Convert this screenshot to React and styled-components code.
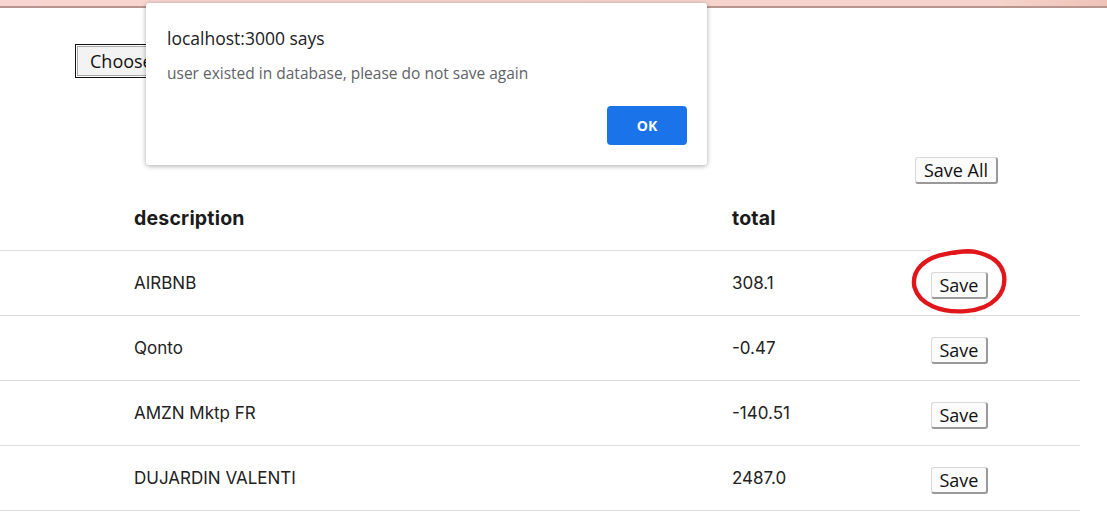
import styled, { createGlobalStyle } from "styled-components";

const rows = [
  { id: 1, description: "AIRBNB", total: "308.1", marked: true },
  { id: 2, description: "Qonto", total: "-0.47" },
  { id: 3, description: "AMZN Mktp FR", total: "-140.51" },
  { id: 4, description: "DUJARDIN VALENTI", total: "2487.0" },
];

const GlobalStyle = createGlobalStyle`
  body {
    margin: 0;
    background: #fff;
    font-family: "Inter", "Noto Sans", sans-serif;
    color: #222;
  }
`;

export default function App() {
  return (
    <StyledPage>
      <GlobalStyle />
      <StyledTopStrip />
      <StyledToolbar>
        <StyledFileFrame>
          <StyledChooseButton>Choose File</StyledChooseButton>
        </StyledFileFrame>
      </StyledToolbar>
      <StyledSaveAllRow>
        <StyledSystemButton $wide>Save All</StyledSystemButton>
      </StyledSaveAllRow>
      <StyledTable>
        <StyledHeadRow>
          <span />
          <StyledHeadCell>description</StyledHeadCell>
          <StyledHeadCell>total</StyledHeadCell>
        </StyledHeadRow>
        {rows.map((row) => (
          <StyledRow key={row.id}>
            <span />
            <StyledCell>{row.description}</StyledCell>
            <StyledCell>{row.total}</StyledCell>
            <StyledActionCell>
              <StyledSystemButton>Save</StyledSystemButton>
              {row.marked && (
                <StyledMark viewBox="0 0 100 68" fill="none">
                  <path
                    d="M44 5 C66 0 90 8 95 26 C99 46 84 63 56 65 C30 67 8 58 3 40 C0 24 12 10 36 6 C46 4 56 2 66 4"
                    stroke="#e0161b"
                    strokeWidth="4.5"
                    strokeLinecap="round"
                  />
                </StyledMark>
              )}
            </StyledActionCell>
          </StyledRow>
        ))}
      </StyledTable>

      <StyledDialog>
        <StyledDialogTitle>localhost:3000 says</StyledDialogTitle>
        <StyledDialogText>user existed in database, please do not save again</StyledDialogText>
        <StyledDialogFooter>
          <StyledOkButton>OK</StyledOkButton>
        </StyledDialogFooter>
      </StyledDialog>
    </StyledPage>
  );
}

const StyledPage = styled.div`
  position: relative;
  width: 1107px;
  height: 521px;
  overflow: hidden;
`;

const StyledTopStrip = styled.div`
  height: 6px;
  background: linear-gradient(90deg, #f7d6d1 0%, #f6d3cc 90%, #efc3b8 100%);
  border-bottom: 2px solid #b99590;
`;

const StyledToolbar = styled.div`
  display: flex;
  padding: 36px 0 0 75px;
`;

const StyledFileFrame = styled.div`
  border: 1px solid #111;
  padding: 1px;
`;

const StyledChooseButton = styled.button`
  height: 30px;
  padding: 0 12px;
  font-family: "Open Sans", "Noto Sans", sans-serif;
  font-size: 18px;
  color: #111;
  background: #f3f3f3;
  border: 1px solid #a8a8a8;
`;

const StyledSaveAllRow = styled.div`
  display: flex;
  justify-content: flex-end;
  padding: 79px 109px 0 0;
`;

const StyledSystemButton = styled.button`
  height: 27px;
  width: ${(p) => (p.$wide ? "83px" : "57px")};
  padding: 0;
  font-family: "Open Sans", "Noto Sans", sans-serif;
  font-size: 18px;
  line-height: 1;
  color: #111;
  background: #fbfbfb;
  border: 1px solid #d8d8d8;
  border-right: 2px solid #999;
  border-bottom: 2px solid #999;
  border-radius: 3px;
`;

const StyledTable = styled.div`
  width: 1080px;
`;

const StyledHeadRow = styled.div`
  display: grid;
  grid-template-columns: 134px 598px 199px;
  align-items: center;
  width: 931px;
  height: 66px;
  border-bottom: 1px solid #dcdcdc;
`;

const StyledHeadCell = styled.span`
  font-size: 19.5px;
  font-weight: 700;
  letter-spacing: 0.2px;
  color: #1b1b1b;
  padding-top: 2px;
`;

const StyledRow = styled.div`
  display: grid;
  grid-template-columns: 134px 598px 199px 1fr;
  align-items: center;
  height: 64px;
  border-bottom: 1px solid #dcdcdc;
`;

const StyledCell = styled.span`
  font-size: 17px;
  color: #222;
`;

const StyledActionCell = styled.div`
  position: relative;
  display: flex;
  padding-top: 4px;
`;

const StyledMark = styled.svg`
  position: absolute;
  left: -21px;
  top: -20px;
  width: 100px;
  height: 66px;
  pointer-events: none;
`;

const StyledDialog = styled.div`
  position: absolute;
  left: 146px;
  top: 3px;
  width: 561px;
  height: 162px;
  box-sizing: border-box;
  padding: 24px 20px 0 21px;
  background: #fff;
  border-radius: 3px;
  box-shadow: 0 1px 5px rgba(0, 0, 0, 0.35);
  font-family: "Open Sans", "Noto Sans", sans-serif;
`;

const StyledDialogTitle = styled.div`
  font-size: 17.5px;
  color: #202124;
  line-height: 22px;
`;

const StyledDialogText = styled.div`
  margin-top: 14px;
  font-size: 15.5px;
  color: #5f6368;
  line-height: 20px;
`;

const StyledDialogFooter = styled.div`
  display: flex;
  justify-content: flex-end;
  margin-top: 23px;
`;

const StyledOkButton = styled.button`
  width: 80px;
  height: 39px;
  border: none;
  border-radius: 4px;
  background: #1a73e8;
  color: #fff;
  font-family: "Open Sans", "Noto Sans", sans-serif;
  font-size: 14px;
  font-weight: 700;
`;
